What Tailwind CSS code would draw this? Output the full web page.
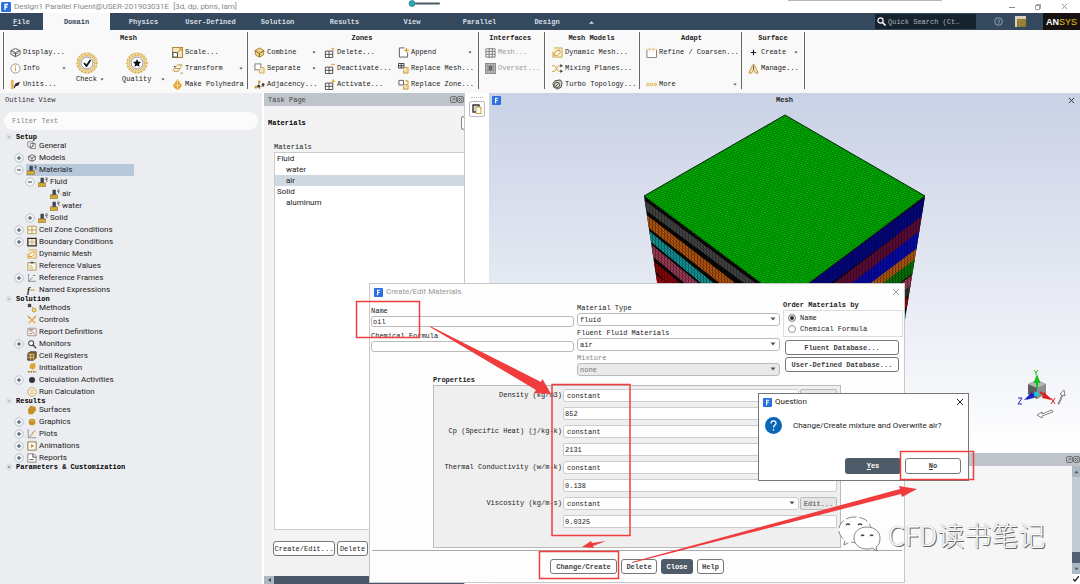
<!DOCTYPE html>
<html lang="en">
<head>
    <meta charset="UTF-8">
    <meta name="viewport" content="width=device-width, initial-scale=1.0">
    <title>Design1 Parallel Fluent</title>
    <script src="https://cdn.jsdelivr.net/npm/@tailwindcss/browser@4"></script>
</head>
<body class="bg-white font-['Liberation_Mono',monospace] text-[7px] leading-[10px] text-[#222]">

    <!-- icon sprite -->
    <svg class="hidden">
        <symbol id="app" viewBox="0 0 10 10"><rect width="10" height="10" rx="1" fill="#2b6fe3"/><path d="M4 8V2.5h3M4 5h2.3" stroke="#fff" stroke-width="1.3" fill="none"/></symbol>
        <symbol id="down" viewBox="0 0 6 4"><path d="M0.5 0.5h5L3 3.5z" fill="#555"/></symbol>
        <symbol id="close" viewBox="0 0 8 8"><path d="M1 1l6 6M7 1L1 7" stroke="currentColor" fill="none"/></symbol>
        <symbol id="float" viewBox="0 0 12 6"><rect x=".5" y=".5" width="5" height="5" rx="1" fill="none" stroke="#666" stroke-width=".8"/><path d="M2 4l2-2M2.5 2H4v1.500" stroke="#666" stroke-width=".7" fill="none"/><rect x="6.500" y=".5" width="5" height="5" rx="1" fill="none" stroke="#666" stroke-width=".8"/><path d="M7.500 1.500l3 3m0-3l-3 3" stroke="#555" stroke-width=".8"/></symbol>
        <symbol id="plus" viewBox="0 0 10 10"><circle cx="5" cy="5" r="4.200" fill="#f4f6f8" stroke="#a3b1bf" stroke-width=".7"/><path d="M3 5h4M5 3v4" stroke="#345" stroke-width="1"/></symbol>
        <symbol id="minus" viewBox="0 0 10 10"><circle cx="5" cy="5" r="4.200" fill="#f4f6f8" stroke="#a3b1bf" stroke-width=".7"/><path d="M3 5h4" stroke="#345" stroke-width="1"/></symbol>

        <symbol id="display" viewBox="0 0 12 12"><path d="M1 4l5-2.500L11 4v4l-5 2.500L1 8zM1 4l5 2 5-2M6 6v4.500" fill="none" stroke="#444" stroke-width=".9"/><path d="M3 6c1 2 5 2 6 0" fill="none" stroke="#444" stroke-width=".8"/></symbol>
        <symbol id="info" viewBox="0 0 12 12"><circle cx="6" cy="6" r="5" fill="#fff" stroke="#777" stroke-width=".8"/><path d="M6 5v4M6 2.800v1.200" stroke="#d9a02c" stroke-width="1.200"/></symbol>
        <symbol id="units" viewBox="0 0 12 12"><path d="M1 1h3v10H1z" fill="#e5b65a"/><path d="M4 9l2-4 5-2-2 4-3 1-1 2z" fill="#222"/></symbol>
        <symbol id="scale" viewBox="0 0 12 12"><rect x=".5" y=".5" width="11" height="11" fill="#f6e6bd" stroke="#a5842f"/><rect x="1" y="6" width="5" height="5" fill="#fff" stroke="#444"/><path d="M6 6l4-4M7.500 2H10v2.500" stroke="#c98f17" fill="none"/></symbol>
        <symbol id="transform" viewBox="0 0 12 12"><path d="M1 8l2-2h6l-2 3H2zM4 4l2-2h5L9 5M9 11h3" fill="#fbf1d8" stroke="#b58a35" stroke-width=".9"/><circle cx="3" cy="4" r="1" fill="#555"/></symbol>
        <symbol id="poly" viewBox="0 0 12 12"><path d="M6 0l2 3 3 4-2 3-3 2-3-2-2-3 3-4z" fill="#dfa434"/><path d="M6 1v10M3 7h6" stroke="#f8e1a7" stroke-width=".9"/></symbol>
        <symbol id="disc" viewBox="0 0 22 22"><circle cx="11" cy="11" r="8.800" fill="none" stroke="#ecca80" stroke-width="3.500"/><circle cx="11" cy="11" r="8.800" fill="none" stroke="#c2963f" stroke-width="3.500" stroke-dasharray=".6 2.400"/><circle cx="11" cy="11" r="8.800" fill="none" stroke="#f7e7bd" stroke-width=".7"/><circle cx="11" cy="11" r="6" fill="#fff" stroke="#666" stroke-width=".7"/></symbol>
        <symbol id="combine" viewBox="0 0 12 12"><path d="M1 4l5-3 5 3-1 5-4 2-4-2z" fill="#f1cf87" stroke="#a5792a" stroke-width=".9"/><path d="M1 4l5 3 5-3M6 7v4" fill="none" stroke="#6b5120" stroke-width=".9"/></symbol>
        <symbol id="separate" viewBox="0 0 12 12"><rect x="1" y="1" width="6.500" height="6.500" fill="#fff" stroke="#666" stroke-width=".9"/><path d="M8 5h3v6H6V8" fill="#f8e6b8" stroke="#d1a03a" stroke-width=".9"/></symbol>
        <symbol id="adjacency" viewBox="0 0 12 12"><path d="M1 8h10M5 2l1 9" fill="none" stroke="#8b7a50"/><circle cx="2" cy="9" r="1.500" fill="#d9a02c"/><circle cx="10" cy="6" r="1.500" fill="#333"/><circle cx="6" cy="3" r="1.400" fill="#d9a02c"/><circle cx="5" cy="8" r="1.600" fill="#444"/></symbol>
        <symbol id="grid" viewBox="0 0 12 12"><path d="M1.500 4.500h8v7h-8zM5.500 4.500v7M1.500 8h8" fill="#fff" stroke="#444"/></symbol>
        <symbol id="gdel" viewBox="0 0 12 12"><use href="#grid"/><path d="M8 1l3 3m0-3L8 4" stroke="#d9971a"/></symbol>
        <symbol id="gdeact" viewBox="0 0 12 12"><use href="#grid"/><path d="M8 1.500h4" stroke="#d9971a"/></symbol>
        <symbol id="gact" viewBox="0 0 12 12"><use href="#grid"/><path d="M8 2.500h4M10 .5v4" stroke="#d9971a"/></symbol>
        <symbol id="append" viewBox="0 0 12 12"><path d="M7 1H1.500v10h9V6" fill="#fff" stroke="#555"/><path d="M6.500 3.500H12M9.200 1v5" stroke="#d9971a" stroke-width="1.200"/></symbol>
        <symbol id="repmesh" viewBox="0 0 12 12"><path d="M.5.5h6v5h-6zM3.500.5v5M.5 3h6" fill="#fff" stroke="#333"/><path d="M7 5h4v6H6V8" fill="#f5deaa" stroke="#c9962f"/></symbol>
        <symbol id="repzone" viewBox="0 0 12 12"><path d="M1 1.500h5v5H1z" fill="#fff" stroke="#555"/><path d="M8 2h3v3M7 6h4v5H6V8" fill="#f5deaa" stroke="#c9962f"/></symbol>
        <symbol id="mesh" viewBox="0 0 12 12"><path d="M1 2h10v9H1zM4.500 1v11M8 1v11M1 5h10M1 8h10" fill="none" stroke="#777"/></symbol>
        <symbol id="overset" viewBox="0 0 12 12"><rect x=".5" y=".5" width="11" height="11" fill="#bbb" stroke="#888"/><path d="M3 0v12M6 0v12M9 0v12M0 4h12M0 8h12" stroke="#888" stroke-width=".7"/><rect x="4" y="3" width="4" height="5" fill="#666"/></symbol>
        <symbol id="dynmesh" viewBox="0 0 12 12"><path d="M2 1h9v10H1V5" fill="#f8edd0" stroke="#c79a3a" stroke-width=".9"/><path d="M2 9l2-4 4-2 1 3-3 3z" fill="#fff" stroke="#d48c12"/></symbol>
        <symbol id="mixing" viewBox="0 0 12 12"><path d="M0 3h3l4 6h4M0 9h3l4-6h4" fill="none" stroke="#cf9c36"/><path d="M9 1l3 2-3 2zM9 7l3 2-3 2z" fill="#444"/></symbol>
        <symbol id="turbo" viewBox="0 0 12 12"><path d="M3 2l6-1 2 3-1 5-4 2-4-2-1-4z" fill="#ccc" stroke="#444"/><circle cx="5.500" cy="6.500" r="2.800" fill="#efe4c4" stroke="#444"/><path d="M4 8l3-3" stroke="#333"/></symbol>
        <symbol id="refine" viewBox="0 0 12 12"><path d="M1 3v8.500h10.500V3" fill="#fff" stroke="#777"/><path d="M1 2.500h10.500M4 1v4M8 1v4" stroke="#e2bd73" stroke-width=".8"/></symbol>
        <symbol id="more" viewBox="0 0 12 12"><circle cx="2" cy="6" r="1.400" fill="none" stroke="#dba63b"/><circle cx="6" cy="6" r="1.400" fill="none" stroke="#dba63b"/><circle cx="10" cy="6" r="1.400" fill="none" stroke="#dba63b"/></symbol>
        <symbol id="create" viewBox="0 0 12 12"><path d="M3 6h6M6 3v6" stroke="#222" stroke-width="1.300"/></symbol>
        <symbol id="manage" viewBox="0 0 12 12"><path d="M6 1l2 3 3 7H8L6 7l-2 4H1l3-7z" fill="#f6e3b3" stroke="#b58a35" stroke-width=".9"/><path d="M6 3v4" stroke="#444"/></symbol>

        <symbol id="general" viewBox="0 0 12 12"><path d="M1 1h6v6H1zM4 3h6v6H4z" fill="#fff" stroke="#666" stroke-width=".9"/><path d="M5 8l4-4" stroke="#555"/></symbol>
        <symbol id="models" viewBox="0 0 12 12"><path d="M2 4l4-2 4 2v4l-4 2-4-2zM2 4l4 2 4-2M6 6v4" fill="none" stroke="#555"/></symbol>
        <symbol id="material" viewBox="0 0 12 12"><path d="M0 7h9v4.500H0z" fill="#d6a935" stroke="#8b6c1e" stroke-width=".7"/><path d="M3 1h4v5l1 1H2l1-1z" fill="#3c4550"/><path d="M9 1h2v2H9l2 2v1" fill="none" stroke="#444" stroke-width=".9"/></symbol>
        <symbol id="cell" viewBox="0 0 12 12"><path d="M1 1.500h10v9H1zM6 1.500v9M1 6h10" fill="#fff7e2" stroke="#b08f4d"/></symbol>
        <symbol id="boundary" viewBox="0 0 12 12"><path d="M6 1.500v9M1 6h10" stroke="#c9a45a"/><path d="M1 1.500h10v9H1z" fill="none" stroke="#332a1a" stroke-width="1.500"/></symbol>
        <symbol id="refval" viewBox="0 0 12 12"><path d="M1 2h10v9H1z" fill="#fbf5e4" stroke="#a08a58"/><path d="M4 1h4v2H4z" fill="#555"/><path d="M3 6h3M3 8.500h5" stroke="#c9a45a"/></symbol>
        <symbol id="frames" viewBox="0 0 12 12"><path d="M2 1v9h9M2 10l5-5" fill="none" stroke="#6a8798"/><path d="M7 3h3" stroke="#3b9e4c"/></symbol>
        <symbol id="methods" viewBox="0 0 12 12"><path d="M1 1h4v4H1z" fill="#444"/><path d="M5 4l3 3" stroke="#b58a35"/><circle cx="8.500" cy="8.500" r="2.300" fill="#f3d58e" stroke="#c18e22"/></symbol>
        <symbol id="controls" viewBox="0 0 12 12"><path d="M2 2l8 8M10 2l-8 8" stroke="#e1aa45" stroke-width="1.600"/><path d="M1 1l2 3M11 1L8 4" stroke="#a8782a"/></symbol>
        <symbol id="report" viewBox="0 0 12 12"><path d="M1 1.500h10v9H1z" fill="#f7eef0" stroke="#9d8f8f"/><path d="M3 4l3 1 3 4M3 8h3" fill="none" stroke="#b96a5a"/><path d="M2 3h6" stroke="#6ba35f"/></symbol>
        <symbol id="monitors" viewBox="0 0 12 12"><circle cx="5" cy="5" r="3" fill="#fff" stroke="#444" stroke-width="1.300"/><path d="M7 7l4 4" stroke="#444" stroke-width="1.600"/></symbol>
        <symbol id="registers" viewBox="0 0 12 12"><path d="M1 3l3-2h7v7l-3 3H1z" fill="#8a6a2c" stroke="#332a1a"/><path d="M1 4h7v7M4.500 4v7M1 7.500h7" fill="none" stroke="#f0d9a0" stroke-width=".8"/></symbol>
        <symbol id="init" viewBox="0 0 12 12"><path d="M4 1l6-1v6L7 8 3 6z" fill="#dfa434"/><path d="M1 10.500h10" stroke="#a37120" stroke-width="2" stroke-dasharray="2 1"/></symbol>
        <symbol id="activity" viewBox="0 0 12 12"><circle cx="6" cy="6" r="3.600" fill="#2d3640"/></symbol>
        <symbol id="run" viewBox="0 0 12 12"><circle cx="6" cy="6" r="5" fill="#fdf7e6" stroke="#b3986a"/><path d="M3.500 4.500h5M3.500 7.500h5" stroke="#cf9c36"/></symbol>
        <symbol id="surface" viewBox="0 0 12 12"><path d="M4 1l6 1 1 4-4 5H2L1 6z" fill="#c78e20"/></symbol>
        <symbol id="graphics" viewBox="0 0 12 12"><circle cx="6" cy="6" r="4" fill="#c78e20"/><path d="M4 4l4 1" stroke="#f2d391"/></symbol>
        <symbol id="plots" viewBox="0 0 12 12"><path d="M1.500 0v10.500H11M3 9c3 0 3-6 7-7" fill="none" stroke="#888"/><path d="M6 7l2-4" stroke="#d9a02c"/></symbol>
        <symbol id="anim" viewBox="0 0 12 12"><path d="M1 1h10v10H1z" fill="#fdf7e6" stroke="#7b6a49"/><path d="M5 4l3 2-3 2z" fill="#a06d1a"/></symbol>
        <symbol id="reports" viewBox="0 0 12 12"><path d="M1 1h7l3 3v7H1z" fill="#fff" stroke="#777"/><path d="M7 1v4h4M3 8h5" fill="none" stroke="#333"/></symbol>
    </svg>

    <div class="relative flex h-screen w-full flex-col overflow-hidden">

        <!-- title bar -->
        <header class="flex h-[13px] shrink-0 items-center gap-[3px] pl-px font-[Roboto,sans-serif] text-[8px] text-[#8a8a8a]">
            <svg class="size-[10px]"><use href="#app"/></svg>
            <span>Design1 Parallel Fluent@USER-201903031E&nbsp; [3d, dp, pbns, lam]</span>
            <div class="ml-auto flex items-center gap-5 pr-3 text-[#888]">
                <svg class="size-[6px]" viewBox="0 0 6 6"><path d="M0 3.500h6" stroke="currentColor"/></svg>
                <svg class="size-[6px]" viewBox="0 0 6 6"><path d="M.5 1.500h4v4h-4zM1.500 1.500v-1h4v4h-1" fill="none" stroke="currentColor" stroke-width=".8"/></svg>
                <svg class="size-[7px]"><use href="#close"/></svg>
            </div>
        </header>
        <svg class="absolute left-[407px] top-0 h-[7px] w-[34px]" viewBox="0 0 34 7"><path d="M5 3.500h27" stroke="#4a5d66" stroke-width="2" stroke-linecap="round"/><circle cx="5" cy="3.500" r="3" fill="#22a9b8" stroke="#4a7d8a" stroke-width=".8"/></svg>
        <div class="absolute left-[788px] top-0 h-px w-[154px] bg-[#bdb5b0]"></div>

        <!-- tabs -->
        <nav class="flex h-[17px] shrink-0 items-stretch bg-[#34495e] font-bold text-[#d5dde5]">
            <button class="w-[43px]"><u>F</u>ile</button>
            <button class="w-[67px] bg-[#f9f9f9] text-[#34495e]">Domain</button>
            <button class="w-[67px]">Physics</button>
            <button class="w-[67px]">User-Defined</button>
            <button class="w-[67px]">Solution</button>
            <button class="w-[67px]">Results</button>
            <button class="w-[68px]">View</button>
            <button class="w-[67px]">Parallel</button>
            <button class="w-[68px]">Design</button>
            <button class="flex w-5 items-center justify-center" aria-label="Collapse ribbon"><svg class="h-1 w-[5px]" viewBox="0 0 6 4"><path d="M0 4h6L3 1z" fill="#d5dde5"/></svg></button>
            <label class="my-px ml-auto flex w-[101px] items-center gap-0.5 bg-[#16222e] pl-0.5">
                <svg class="size-[9px] shrink-0" viewBox="0 0 9 9"><circle cx="3.500" cy="3.500" r="2.600" fill="none" stroke="#fff" stroke-width="1.200"/><path d="M5.500 5.500l3 3" stroke="#fff" stroke-width="1.600"/></svg>
                <input class="w-full bg-transparent font-normal outline-none placeholder:text-[#aab4be]" placeholder="Quick Search (Ct…" aria-label="Quick search">
            </label>
            <button class="ml-4 flex w-3 items-center justify-center" aria-label="Help"><svg class="size-[9px]" viewBox="0 0 9 9"><circle cx="4.500" cy="4.500" r="3.800" fill="none" stroke="#aeb9c4" stroke-width=".8"/><path d="M3.500 3.500q1-1.500 2 0T4.500 5.500v1" fill="none" stroke="#aeb9c4" stroke-width=".8"/></svg></button>
            <button class="ml-[10px] flex w-3 items-center justify-center" aria-label="Layout"><svg class="size-[11px]" viewBox="0 0 11 11"><rect width="11" height="11" fill="#d8d3c0"/><rect x="2" y="3" width="9" height="8" fill="#967a33"/><path d="M3 5h7M3 8h7" stroke="#a98c45"/></svg></button>
            <div class="ml-[17px] w-[37px] bg-[#17120f] text-center font-['Liberation_Sans',sans-serif] text-[9px] leading-[19px] text-white">AN<span class="font-normal text-[#e8c11f]">SYS</span></div>
        </nav>

        <!-- ribbon -->
        <div class="flex h-[63px] shrink-0 bg-[#f9f9f9] pb-1 pl-[3px] pt-0.5">
            <section class="w-[244px] border-l border-[#666] pl-1.5">
                <h2 class="text-center font-bold leading-[12px]">Mesh</h2>
                <div class="flex">
                    <div class="w-[56px]">
                        <button class="flex h-4 w-full items-center gap-0.5"><svg class="size-[11px]"><use href="#display"/></svg>Display...</button>
                        <button class="flex h-4 w-full items-center gap-0.5"><svg class="size-[11px]"><use href="#info"/></svg>Info<svg class="ml-auto h-[3px] w-1"><use href="#down"/></svg></button>
                        <button class="flex h-4 w-full items-center gap-0.5"><svg class="size-[11px]"><use href="#units"/></svg>Units...</button>
                    </div>
                    <button class="ml-[10px] flex w-[28px] flex-col pt-2">
                        <span class="relative"><svg class="size-[22px]"><use href="#disc"/></svg><svg class="absolute inset-0 size-[22px]" viewBox="0 0 22 22"><path d="M8 11l2.500 3 4-6" fill="none" stroke="#111" stroke-width="1.800"/></svg></span>
                        <span class="flex w-full items-center justify-between">Check<svg class="h-[3px] w-1"><use href="#down"/></svg></span>
                    </button>
                    <button class="ml-[18px] flex w-[43px] flex-col pt-2">
                        <span class="relative ml-1"><svg class="size-[22px]"><use href="#disc"/></svg><svg class="absolute inset-0 size-[22px]" viewBox="0 0 22 22"><path d="M11 7l1.200 2.600 2.800.3-2 2 .5 2.900-2.500-1.400-2.500 1.400.5-2.900-2-2 2.800-.3z" fill="#111"/></svg></span>
                        <span class="flex w-full items-center justify-between">Quality<svg class="h-[3px] w-1"><use href="#down"/></svg></span>
                    </button>
                    <div class="ml-[7px] w-[71px] whitespace-nowrap">
                        <button class="flex h-4 w-full items-center gap-0.5"><svg class="size-[11px] shrink-0"><use href="#scale"/></svg>Scale...</button>
                        <button class="flex h-4 w-full items-center gap-0.5"><svg class="size-[11px] shrink-0"><use href="#transform"/></svg>Transform<svg class="ml-auto h-[3px] w-1"><use href="#down"/></svg></button>
                        <button class="flex h-4 w-full items-center gap-0.5"><svg class="size-[11px] shrink-0"><use href="#poly"/></svg>Make Polyhedra</button>
                    </div>
                </div>
            </section>

            <section class="w-[231px] border-l border-[#666] pl-1.5">
                <h2 class="pr-2 text-center font-bold leading-[12px]">Zones</h2>
                <div class="flex whitespace-nowrap">
                    <div class="w-[70px]">
                        <button class="flex h-4 w-[62px] items-center gap-0.5"><svg class="size-[11px] shrink-0"><use href="#combine"/></svg>Combine<svg class="ml-auto h-[3px] w-1"><use href="#down"/></svg></button>
                        <button class="flex h-4 w-[62px] items-center gap-0.5"><svg class="size-[11px] shrink-0"><use href="#separate"/></svg>Separate<svg class="ml-auto h-[3px] w-1"><use href="#down"/></svg></button>
                        <button class="flex h-4 items-center gap-0.5"><svg class="size-[11px] shrink-0"><use href="#adjacency"/></svg>Adjacency...</button>
                    </div>
                    <div class="w-[74px]">
                        <button class="flex h-4 items-center gap-0.5"><svg class="size-[11px] shrink-0"><use href="#gdel"/></svg>Delete...</button>
                        <button class="flex h-4 items-center gap-0.5"><svg class="size-[11px] shrink-0"><use href="#gdeact"/></svg>Deactivate...</button>
                        <button class="flex h-4 items-center gap-0.5"><svg class="size-[11px] shrink-0"><use href="#gact"/></svg>Activate...</button>
                    </div>
                    <div class="w-[74px]">
                        <button class="flex h-4 w-full items-center gap-0.5"><svg class="size-[11px] shrink-0"><use href="#append"/></svg>Append<svg class="ml-auto h-[3px] w-1"><use href="#down"/></svg></button>
                        <button class="flex h-4 items-center gap-0.5"><svg class="size-[11px] shrink-0"><use href="#repmesh"/></svg>Replace Mesh...</button>
                        <button class="flex h-4 items-center gap-0.5"><svg class="size-[11px] shrink-0"><use href="#repzone"/></svg>Replace Zone...</button>
                    </div>
                </div>
            </section>

            <section class="w-[66px] border-l border-[#666] pl-1.5">
                <h2 class="font-bold leading-[12px]">&nbsp;Interfaces</h2>
                <button class="flex h-4 items-center gap-0.5 text-[#999]"><svg class="size-[11px]"><use href="#mesh"/></svg>Mesh...</button>
                <button class="flex h-4 items-center gap-0.5 text-[#999]"><svg class="size-[11px]"><use href="#overset"/></svg>Overset...</button>
            </section>

            <section class="w-[95px] whitespace-nowrap border-l border-[#666] pl-[7px]">
                <h2 class="pr-2 text-center font-bold leading-[12px]">Mesh Models</h2>
                <button class="flex h-4 items-center gap-0.5"><svg class="size-[11px] shrink-0"><use href="#dynmesh"/></svg>Dynamic Mesh...</button>
                <button class="flex h-4 items-center gap-0.5"><svg class="size-[11px] shrink-0"><use href="#mixing"/></svg>Mixing Planes...</button>
                <button class="flex h-4 items-center gap-0.5"><svg class="size-[11px] shrink-0"><use href="#turbo"/></svg>Turbo Topology...</button>
            </section>

            <section class="w-[102px] whitespace-nowrap border-l border-[#666] pl-1.5 pr-1">
                <h2 class="text-center font-bold leading-[12px]">Adapt</h2>
                <button class="mb-4 flex h-4 items-center gap-0.5"><svg class="size-[11px] shrink-0"><use href="#refine"/></svg>Refine / Coarsen...</button>
                <button class="flex h-4 w-full items-center gap-0.5"><svg class="size-[11px] shrink-0"><use href="#more"/></svg>More<svg class="ml-auto h-[3px] w-1"><use href="#down"/></svg></button>
            </section>

            <section class="w-[64px] border-x border-[#666] px-1.5">
                <h2 class="text-center font-bold leading-[12px]">Surface</h2>
                <button class="flex h-4 w-full items-center gap-0.5"><svg class="size-[11px]"><use href="#create"/></svg>Create<svg class="ml-auto h-[3px] w-1"><use href="#down"/></svg></button>
                <button class="flex h-4 items-center gap-0.5"><svg class="size-[11px]"><use href="#manage"/></svg>Manage...</button>
            </section>
        </div>

        <main class="flex min-h-0 flex-1">

            <!-- outline -->
            <aside class="w-[262px] shrink-0 bg-[#ecedf0]">
                <h2 class="pl-[5px] pt-0.5 text-[#333]">Outline View</h2>
                <input class="mx-1 mt-[7px] block h-[18px] w-[254px] rounded-full bg-[#fbfbfb] pl-2 outline-none placeholder:text-[#888]" placeholder="Filter Text" aria-label="Filter text">
                <ul id="tree" class="pt-1"></ul>
            </aside>

            <!-- task page -->
            <section class="ml-[2px] flex w-[201px] shrink-0 flex-col overflow-hidden border-r border-[#c4c7cb] bg-[#f3f3f4]">
                <div class="flex h-[13px] shrink-0 items-center justify-between bg-[#bfc4ca] pl-1 text-[#444]">Task Page<svg class="h-[7px] w-[14px]"><use href="#float"/></svg></div>
                <div class="flex h-[33px] shrink-0 items-center justify-between pl-1 font-bold text-black">Materials<span class="h-[14px] w-[3px] rounded-l border border-r-0 border-[#888] bg-white"></span></div>
                <h3 class="mt-[3px] pl-[10px] leading-[10px]">Materials</h3>
                <ul class="ml-[10px] h-[378px] shrink-0 border border-r-0 border-[#ccc] bg-white font-[Roboto,sans-serif] text-[8px] leading-[11px]">
                    <li class="pl-0.5">Fluid</li>
                    <li class="pl-[11px]">water</li>
                    <li class="bg-[#d0d8e0] pl-[11px]">air</li>
                    <li class="pl-0.5">Solid</li>
                    <li class="pl-[11px]">aluminum</li>
                </ul>
                <div class="flex gap-0.5 pl-[9px] pt-[11px]">
                    <button class="h-[15px] w-[62px] rounded-[3px] border border-[#777] bg-white">Create/Edit...</button>
                    <button class="h-[15px] w-[31px] rounded-[3px] border border-[#777] bg-white">Delete</button>
                </div>
                <div class="mt-auto flex h-2 bg-[#4b5768]"><span class="flex w-[10px] items-center justify-center bg-[#a9b8c2]"><svg class="h-1 w-[3px]" viewBox="0 0 3 4"><path d="M3 0v4L0 2z" fill="#445"/></svg></span></div>
            </section>

            <div class="flex w-[24px] shrink-0 flex-col items-center bg-white pt-1">
                <div class="w-3 border-t border-dotted border-[#bbb]"></div>
                <button class="mt-[3px] flex size-4 items-center justify-center rounded-[2px] border border-[#bbb]" aria-label="Copy view"><svg class="size-[10px]" viewBox="0 0 10 10"><path d="M1 1h6v7H1z" fill="#ddd" stroke="#333" stroke-width="1.400"/><path d="M4 3h5v6.500H4z" fill="#fffdf2" stroke="#c79a3a"/></svg></button>
            </div>

            <div class="flex min-w-0 flex-1 flex-col">
                <!-- graphics window -->
                <section class="relative h-[360px] shrink-0 bg-linear-to-b from-[#c9d1e5] to-white">
                    <div class="flex h-[14px] items-center justify-between px-[3px] font-bold text-[#222]">
                        <svg class="size-[9px]"><use href="#app"/></svg>Mesh<svg class="mr-0.5 size-[7px]"><use href="#close"/></svg>
                    </div>
                    <svg class="absolute left-0 top-0 h-[360px] w-[591px]" viewBox="489 93 591 360">
                        <defs>
                            <pattern id="cells" width="3.400" height="4" patternUnits="userSpaceOnUse" patternTransform="rotate(14)"><rect width="3.400" height="4" fill="#00c403"/><path d="M0 .7L1.700 0l1.700.7M0 .7v1.500l1.700.7 1.700-.7V.7M1.700 2.900V4" fill="none" stroke="#003d00" stroke-width=".55"/></pattern>
                            <pattern id="hatch" width="3" height="3" patternUnits="userSpaceOnUse"><path d="M0 0l3 3M1.500 0v3" stroke="#000" stroke-opacity=".5" stroke-width=".6"/></pattern>
                            <clipPath id="left"><path d="M644 196l141 105v80H672z"/></clipPath>
                            <clipPath id="right"><path d="M925 196L785 301v80h110z"/></clipPath>
                        </defs>
                        <g clip-path="url(#left)">
                            <path d="M640 190h150v200H640z" fill="#0b0808"/>
                            <path d="M644 200L790 309v8L644 209z" fill="#454545"/>
                            <path d="M644 213l90 69 10 20-99-77z" fill="#b3540f"/>
                            <path d="M644 227l72 58-10 2-60-49z" fill="#149598"/>
                            <path d="M648 242l54 44h-14l-38-32z" fill="#9b3b55"/>
                            <path d="M650 258l36 30h-14l-20-20z" fill="#8c0508"/>
                            <path d="M654 273l18 14h-14z" fill="#a50508"/>
                            <path d="M640 190h150v200H640z" fill="url(#hatch)"/>
                        </g>
                        <g clip-path="url(#right)">
                            <path d="M780 190h150v200H780z" fill="#050508"/>
                            <path d="M927 196L785 301v16l141-103z" fill="#040585"/>
                            <path d="M926 213L810 301v14l115-85z" fill="#5e0b37"/>
                            <path d="M926 226L830 300v15l93-70z" fill="#0509ae"/>
                            <path d="M924 243l-80 60v10l79-57z" fill="#b0560f"/>
                            <path d="M922 254l-70 52v12l68-50z" fill="#077408"/>
                            <path d="M920 269l-60 45v10l60-44z" fill="#9b3b55"/>
                            <path d="M918 280l-50 38v10l50-40z" fill="#333"/>
                            <path d="M916 291l-50 38v10l48-38z" fill="#9c0508"/>
                            <path d="M914 307l-50 38v10l48-38z" fill="#149598"/>
                            <path d="M780 190h150v200H780z" fill="url(#hatch)"/>
                        </g>
                        <path d="M785 115l140 81-140 105-141-105z" fill="url(#cells)" stroke="#062806"/>

                        <!-- axis triad -->
                        <path d="M1028 384l9-4 9 4v10l-9 5-9-5z" fill="#8e8e8e"/>
                        <path d="M1028 384l9 4v11l-9-5z" fill="#5e5e5e"/>
                        <path d="M1028 384l9-4 9 4-9 4z" fill="#b5b5b5"/>
                        <path d="M1037 388v-10" stroke="#16c021" stroke-width="2"/><path d="M1033.500 383l3.500-9 3.500 9z" fill="#16c021"/>
                        <path d="M1034 370l2 2.500 2-2.500M1036 372v3" stroke="#16c021" fill="none"/>
                        <path d="M1037 393l-10 6" stroke="#1722c9" stroke-width="2"/><path d="M1032 392l-8 8 10-2z" fill="#1722c9"/>
                        <path d="M1018 398h4l-4 6h4" stroke="#1722c9" fill="none"/>
                        <path d="M1040 392l10 7" stroke="#dd1c1c" stroke-width="2"/><path d="M1044 392l8 8-10-2z" fill="#dd1c1c"/>
                        <path d="M1051 398l4 6m0-6l-4 6" stroke="#dd1c1c"/>
                        <circle cx="1036.500" cy="394" r="2.500" fill="#1cc6d4"/>
                        <path d="M1037 415l5-3v2l10-4 1 2-11 4v2zM1058 404l4-9-2-1 4-4 1 6-2-1-4 9z" fill="#fff" stroke="#666" stroke-width=".8"/>
                    </svg>
                </section>

                <!-- console -->
                <section class="flex min-h-0 flex-1 flex-col bg-[#f6f6f7]">
                    <div class="flex h-[13px] shrink-0 items-center justify-end bg-[#bfc4ca]"><svg class="h-[7px] w-[14px]"><use href="#float"/></svg></div>
                    <div class="flex w-2 flex-1 flex-col self-end bg-[#c3cbd3]">
                        <span class="flex h-[11px] items-center justify-center bg-[#a9b8c2]"><svg class="h-1 w-[5px] rotate-180"><use href="#down"/></svg></span>
                        <span class="mt-auto h-[11px] bg-[#566073]"></span>
                        <span class="flex h-[11px] items-center justify-center bg-[#a9b8c2]"><svg class="h-1 w-[5px]"><use href="#down"/></svg></span>
                        <span class="flex h-[10px] items-center justify-center bg-white"><svg class="size-[6px]" viewBox="0 0 6 6"><path d="M0 3l2 2 4-5" fill="none" stroke="#222" stroke-width="1.400"/></svg></span>
                    </div>
                </section>
            </div>
        </main>

        <!-- create/edit materials -->
        <form class="absolute left-[369px] top-[283px] flex h-[300px] w-[536px] flex-col border border-[#c8c8c8] bg-[#fdfdfd]">
            <div class="flex h-4 items-center gap-[3px] px-1 font-[Roboto,sans-serif] text-[8px] text-[#999]">
                <svg class="size-[9px]"><use href="#app"/></svg>Create/Edit Materials
                <button type="button" class="ml-auto" aria-label="Close"><svg class="size-2"><use href="#close"/></svg></button>
            </div>
            <div class="flex gap-[3px] pl-px">
                <div class="flex w-[203px] flex-col pt-[6px]">
                    <label for="name">Name</label>
                    <input id="name" class="h-[11px] rounded-[3px] border border-[#bbb] bg-white pl-px outline-none" value="oil">
                    <label for="formula" class="mt-1">Chemical Formula</label>
                    <input id="formula" class="h-[11px] rounded-[3px] border border-[#bbb] bg-white pl-px outline-none">
                </div>
                <div class="flex w-[203px] flex-col pt-[3px]">
                    <label for="type">Material Type</label>
                    <div class="relative mb-0.5">
                        <select id="type" class="block h-[13px] w-full appearance-none rounded-[3px] border border-[#bbb] bg-white pl-0.5"><option>fluid</option></select>
                        <svg class="pointer-events-none absolute right-1 top-1 h-1 w-[6px]"><use href="#down"/></svg>
                    </div>
                    <label for="fluid">Fluent Fluid Materials</label>
                    <div class="relative mb-0.5">
                        <select id="fluid" class="block h-[13px] w-full appearance-none rounded-[3px] border border-[#bbb] bg-white pl-0.5"><option>air</option></select>
                        <svg class="pointer-events-none absolute right-1 top-1 h-1 w-[6px]"><use href="#down"/></svg>
                    </div>
                    <label for="mixture" class="text-[#888]">Mixture</label>
                    <div class="relative">
                        <select id="mixture" disabled class="block h-[13px] w-full appearance-none rounded-[3px] border border-[#bbb] bg-[#e9e9e9] pl-0.5 text-[#777] opacity-100"><option>none</option></select>
                        <svg class="pointer-events-none absolute right-1 top-1 h-1 w-[6px]"><use href="#down"/></svg>
                    </div>
                </div>
                <div class="w-[120px]">
                    <fieldset>
                        <legend class="font-bold">Order Materials by</legend>
                        <div class="h-[27px] border border-[#ddd] pl-1 pt-px">
                            <label class="flex h-[11px] items-center gap-1"><input type="radio" name="order" checked class="size-2 appearance-none rounded-full border border-[#999] bg-white checked:bg-[#333] checked:shadow-[inset_0_0_0_1px_#fff]">Name</label>
                            <label class="flex h-[11px] items-center gap-1"><input type="radio" name="order" class="size-2 appearance-none rounded-full border border-[#999] bg-white checked:bg-[#333] checked:shadow-[inset_0_0_0_1px_#fff]">Chemical Formula</label>
                        </div>
                    </fieldset>
                    <button type="button" class="ml-0.5 mt-[3px] block h-[15px] w-[114px] rounded-[3px] border border-[#777] bg-white font-bold text-[#444]">Fluent Database...</button>
                    <button type="button" class="ml-0.5 mt-0.5 block h-[15px] w-[114px] rounded-[3px] border border-[#777] bg-white font-bold text-[#444]">User-Defined Database...</button>
                </div>
            </div>
            <fieldset class="ml-[63px] mt-auto w-[408px]">
                <legend class="font-bold leading-[9px]">Properties</legend>
                <div id="props" class="grid h-[163px] grid-cols-[128px_236px_37px] content-start gap-x-px gap-y-[5px] border border-[#bbb] bg-[#efefef] pt-[3px]"></div>
            </fieldset>
            <div class="mx-0.5 mt-0.5 flex h-8 items-center justify-center gap-1 border-t border-[#aaa]">
                <button type="button" class="h-[15px] w-[67px] rounded-[3px] border border-[#777] bg-white font-bold text-[#444]">Change/Create</button>
                <button type="button" class="h-[15px] w-[36px] rounded-[3px] border border-[#777] bg-white font-bold text-[#444]">Delete</button>
                <button type="button" class="h-[15px] w-[32px] rounded-[3px] bg-[#4f5b69] font-bold text-white">Close</button>
                <button type="button" class="h-[15px] w-[27px] rounded-[3px] border border-[#777] bg-white font-bold text-[#444]">Help</button>
            </div>
        </form>

        <!-- question -->
        <div role="dialog" class="absolute left-[758px] top-[393px] flex h-[88px] w-[211px] flex-col border border-[#777] bg-white font-[Roboto,sans-serif] text-[8px]">
            <div class="flex h-4 items-center gap-[3px] px-1">
                <svg class="size-[9px]"><use href="#app"/></svg>Question
                <button class="ml-auto" aria-label="Close"><svg class="size-2"><use href="#close"/></svg></button>
            </div>
            <div class="flex items-center gap-[11px] px-1.5 pt-[7px]">
                <svg class="size-[17px]" viewBox="0 0 17 17"><circle cx="8.500" cy="8.500" r="8.500" fill="#0b66b8"/><path d="M6 6.500c0-3.500 5-3.500 5-.3 0 2-2.500 1.800-2.500 4.300M8.500 12v1.500" fill="none" stroke="#fff" stroke-width="1.300"/></svg>
                <p class="whitespace-nowrap">Change/Create mixture and Overwrite air?</p>
            </div>
            <div class="mb-[6px] mr-[7px] mt-auto flex justify-end gap-1 font-['Liberation_Mono',monospace] text-[7px] font-bold">
                <button class="h-4 w-[56px] rounded-[3px] bg-[#4f5b69] text-white"><u>Y</u>es</button>
                <button class="h-4 w-[56px] rounded-[3px] border border-[#777] text-[#444]"><u>N</u>o</button>
            </div>
        </div>

        <!-- watermark -->
        <div class="absolute left-[838px] top-[516px] flex items-center gap-[7px]">
            <svg class="h-[38px] w-[43px]" viewBox="0 0 43 38" fill="#fff" stroke="#777" stroke-width=".9">
                <path d="M17 1C7 1 1 7 1 14c0 5 3 8 6 10l-1 5 6-3c8 2 21-1 21-12C33 6 26 1 17 1z" stroke-dasharray="9 3"/>
                <path d="M29 11c-8 0-13 5-13 11s5 11 13 11c2 0 4 0 5-1l5 3-1-4c3-2 4-5 4-9 0-6-5-11-13-11z"/>
                <path d="M8 9q2-2 4 0M20 9q2-2 4 0M23 20q2-2 3 0M32 20q2-2 3 0" fill="none" stroke="#444" stroke-width="1.300"/>
            </svg>
            <span class="whitespace-nowrap font-['Noto_Sans_CJK_SC',sans-serif] text-[27px] font-light leading-[38px] text-white [text-shadow:1px_1px_0_#666,0_0_1px_#777]" lang="zh">CFD读书笔记</span>
        </div>

        <!-- markup -->
        <svg class="pointer-events-none absolute left-0 top-0 h-[584px] w-[1080px]" viewBox="0 0 1080 584">
            <g fill="none" stroke="#ee3f3f" stroke-width="1.500">
                <rect x="356.500" y="301.500" width="63" height="36"/>
                <rect x="552" y="384.500" width="78" height="151"/>
                <rect x="539.500" y="551.500" width="79" height="27"/>
                <rect x="900.500" y="451.500" width="73" height="28"/>
            </g>
            <g fill="#f03c3c">
                <path d="M430 327l1-.5L541 382l1.500-3L551 394l-17-1 2-3z"/>
                <path d="M606 541l-13 5 1 2-12-1 9-6 1 2z"/>
                <path d="M632 562l268-73-1-3 18 3-15 8-1-3-269 69z"/>
            </g>
        </svg>
    </div>
</body>

<script>
    // [level, label, icon, toggle]
    const nodes = [
        [0, 'Setup', '', 'minus'],
        [1, 'General', 'general', ''],
        [1, 'Models', 'models', 'plus'],
        [1, 'Materials', 'material', 'minus'],
        [2, 'Fluid', 'material', 'minus'],
        [3, 'air', 'material', ''],
        [3, 'water', 'material', ''],
        [2, 'Solid', 'material', 'plus'],
        [1, 'Cell Zone Conditions', 'cell', 'plus'],
        [1, 'Boundary Conditions', 'boundary', 'plus'],
        [1, 'Dynamic Mesh', 'dynmesh', ''],
        [1, 'Reference Values', 'refval', ''],
        [1, 'Reference Frames', 'frames', 'plus'],
        [1, 'Named Expressions', 'fx', ''],
        [0, 'Solution', '', 'minus'],
        [1, 'Methods', 'methods', ''],
        [1, 'Controls', 'controls', ''],
        [1, 'Report Definitions', 'report', ''],
        [1, 'Monitors', 'monitors', 'plus'],
        [1, 'Cell Registers', 'registers', ''],
        [1, 'Initialization', 'init', ''],
        [1, 'Calculation Activities', 'activity', 'plus'],
        [1, 'Run Calculation', 'run', ''],
        [0, 'Results', '', 'minus'],
        [1, 'Surfaces', 'surface', ''],
        [1, 'Graphics', 'graphics', 'plus'],
        [1, 'Plots', 'plots', 'plus'],
        [1, 'Animations', 'anim', 'plus'],
        [1, 'Reports', 'reports', 'plus'],
        [0, 'Parameters &amp; Customization', '', 'plus'],
    ];
    const indent = ['pl-[6px]', 'pl-[14px]', 'pl-[25px]', 'pl-[37px]'];

    document.getElementById('tree').innerHTML = nodes.map(([level, label, icon, toggle]) => {
        if (level === 0) {
            return `<li class="flex h-[6px] items-center gap-1 font-bold text-black ${indent[0]}">
                <button class="size-[6px]" aria-label="Toggle"><svg class="block size-[6px]"><use href="#${toggle}"/></svg></button>${label}</li>`;
        }
        const glyph = icon === 'fx'
            ? `<i class="w-[10px] font-['Liberation_Serif',serif] text-[9px] font-bold">f<span class="text-[#d9971a]">=</span></i>`
            : `<svg class="size-[10px]"><use href="#${icon}"/></svg>`;
        const mark = toggle
            ? `<button class="size-[10px]" aria-label="Toggle"><svg class="block size-[10px]"><use href="#${toggle}"/></svg></button>`
            : `<span class="size-[10px]"></span>`;
        return `<li class="flex h-3 items-center gap-0.5 font-[Roboto,sans-serif] text-[8px] ${indent[level]}">
            ${mark}<span class="flex h-3 w-[108px] items-center gap-0.5 whitespace-nowrap pl-px ${label === 'Materials' ? 'bg-[#b7c8db]' : ''}">${glyph}${label}</span></li>`;
    }).join('');

    const props = [
        ['Density (kg/m3)', '852'],
        ['Cp (Specific Heat) (j/kg-k)', '2131'],
        ['Thermal Conductivity (w/m-k)', '0.138'],
        ['Viscosity (kg/m-s)', '0.0325'],
    ];

    document.getElementById('props').innerHTML = props.map(([label, value], i) => `
        <label for="prop${i}" class="whitespace-nowrap text-right leading-[13px]">${label}</label>
        <div class="relative">
            <select id="prop${i}" class="block h-[13px] w-full appearance-none rounded-[3px] border border-[#ccc] bg-white pl-[3px]"><option>constant</option></select>
            <svg class="pointer-events-none absolute right-1 top-1 h-1 w-[6px]"><use href="#down"/></svg>
        </div>
        <button type="button" class="h-[13px] rounded-[2px] border border-[#bbb] bg-[#e6e6e6] font-bold text-[#777]">Edit...</button>
        <input class="col-span-2 col-start-2 h-[13px] rounded-[2px] border border-[#ccc] bg-white pl-px outline-none" value="${value}" aria-label="${label} value">
    `).join('');
</script>
</html>
